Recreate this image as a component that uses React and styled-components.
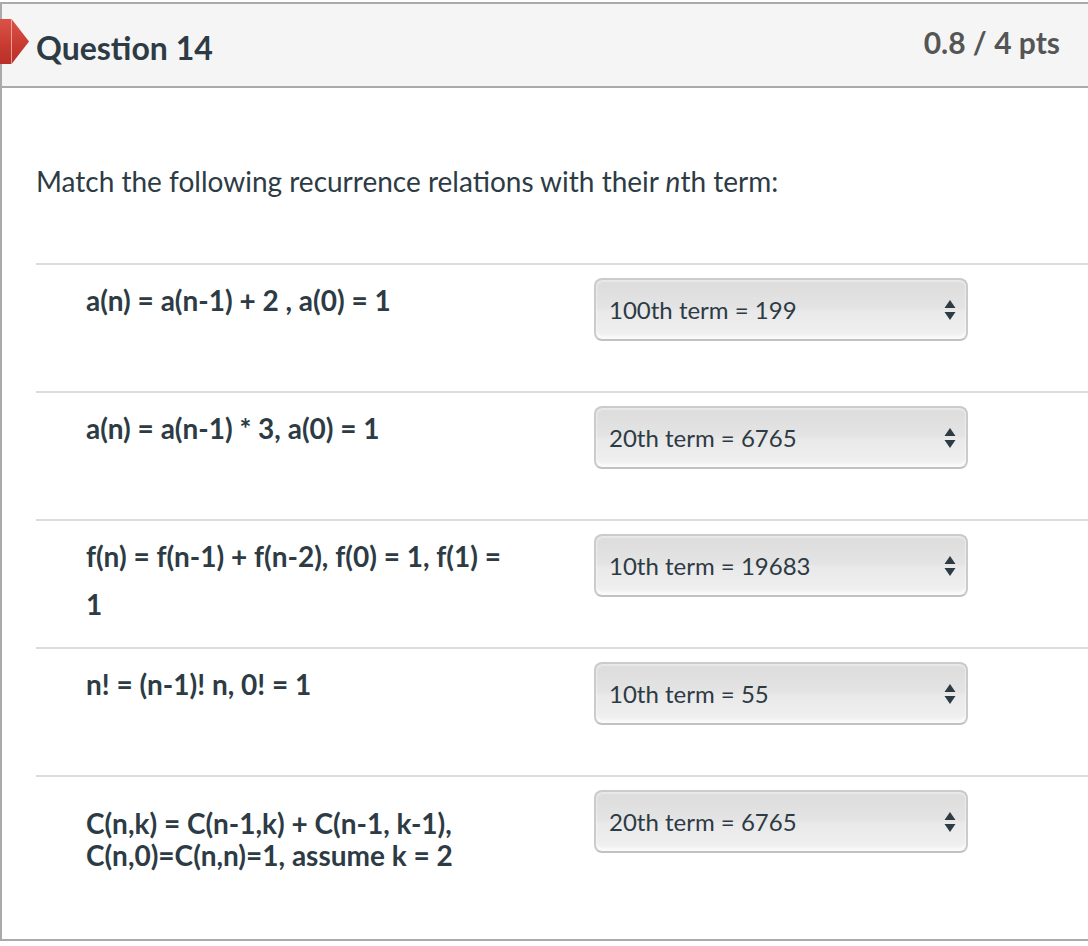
import React from "react";
import styled, { createGlobalStyle } from "styled-components";

const GlobalStyle = createGlobalStyle`
  html, body { margin: 0; padding: 0; background: #fff; overflow: hidden; }
  body { font-family: Lato, "Noto Sans", sans-serif; color: #2d3b45; }
  * { box-sizing: border-box; }
`;

const Card = styled.section`
  margin-top: 2px;
  width: 100%;
  border-top: 2px solid #aaa;
  border-left: 2px solid #aaa;
  border-bottom: 2px solid #aaa;
  position: relative;
`;

const Header = styled.header`
  height: 84px;
  background: #f5f5f5;
  border-bottom: 2px solid #aaa;
  display: flex;
  justify-content: space-between;
  align-items: flex-start;
  padding: 0 28px 0 34px;
`;

const Flag = styled.div`
  position: absolute;
  left: -2px;
  top: 15px;
  width: 29px;
  height: 45px;
  background: linear-gradient(#dc5249, #c63a31 60%, #b83128);
  clip-path: polygon(0 0, 40% 0, 100% 50%, 40% 100%, 0 100%);
  &::after {
    content: "";
    position: absolute;
    left: 11px;
    top: 0;
    bottom: 0;
    width: 1px;
    background: rgba(255, 200, 190, 0.7);
  }
`;

const Title = styled.h2`
  margin: 25px 0 0;
  font-size: 32px;
  line-height: 1.2;
  font-weight: 700;
  color: #2d3b45;
`;

const Points = styled.div`
  margin-top: 20px;
  font-size: 30px;
  line-height: 1.2;
  font-weight: 700;
  color: #555;
`;

const Body = styled.div`
  padding: 0 0 36px 34px;
`;

const Intro = styled.p`
  margin: 77px 0 66px;
  font-size: 28px;
  line-height: 32px;
  font-weight: 400;
  color: #2d3b45;
`;

const Row = styled.div`
  min-height: 128px;
  border-top: 2px solid #dcdcdc;
  display: flex;
  align-items: flex-start;
  padding: 13px 0 0 50px;
`;

const Prompt = styled.div`
  width: 424px;
  margin-right: 84px;
  margin-top: ${(p) => p.$offset}px;
  font-size: 28px;
  line-height: ${(p) => p.$lh}px;
  font-weight: 700;
  color: #2d3b45;
`;

const Select = styled.div`
  width: 374px;
  height: 63px;
  border: 2px solid #cbcbcb;
  border-bottom-color: #c2c2c2;
  border-radius: 8px;
  background: linear-gradient(#dcdcdc 0%, #e4e4e4 48%, #e9e9e9 52%, #eeeeee 85%, #f3f3f3 100%);
  box-shadow: inset 0 -3px 3px rgba(255, 255, 255, 0.7), inset 0 2px 2px rgba(255, 255, 255, 0.4);
  display: flex;
  align-items: center;
  justify-content: space-between;
  padding: 0 10px 0 13px;
  font-size: 24px;
  color: #2d3b45;
`;

const Arrows = styled.svg`
  width: 12px;
  height: 22px;
  flex: none;
`;

const rows = [
  { text: "a(n) = a(n-1) + 2 , a(0) = 1", value: "100th term = 199", lh: 48, offset: -2 },
  { text: "a(n) = a(n-1) * 3, a(0) = 1", value: "20th term = 6765", lh: 48, offset: -2 },
  { text: "f(n) = f(n-1) + f(n-2), f(0) = 1, f(1) = 1", value: "10th term = 19683", lh: 48, offset: -2 },
  { text: "n! = (n-1)! n, 0! = 1", value: "10th term = 55", lh: 48, offset: -2 },
  { text: "C(n,k) = C(n-1,k) + C(n-1, k-1), C(n,0)=C(n,n)=1, assume k = 2", value: "20th term = 6765", lh: 32, offset: 17 },
];

export default function App() {
  return (
    <>
      <GlobalStyle />
      <Card>
        <Flag />
        <Header>
          <Title>Question 14</Title>
          <Points>0.8 / 4 pts</Points>
        </Header>
        <Body>
          <Intro>
            Match the following recurrence relations with their <i>n</i>th term:
          </Intro>
          {rows.map((r, i) => (
            <Row key={i}>
              <Prompt $lh={r.lh} $offset={r.offset}>{r.text}</Prompt>
              <Select role="combobox">
                <span>{r.value}</span>
                <Arrows viewBox="0 0 12 22">
                  <polygon points="6,1 11.5,9 0.5,9" fill="#2d3b45" />
                  <polygon points="0.5,13 11.5,13 6,21" fill="#2d3b45" />
                </Arrows>
              </Select>
            </Row>
          ))}
        </Body>
      </Card>
    </>
  );
}
